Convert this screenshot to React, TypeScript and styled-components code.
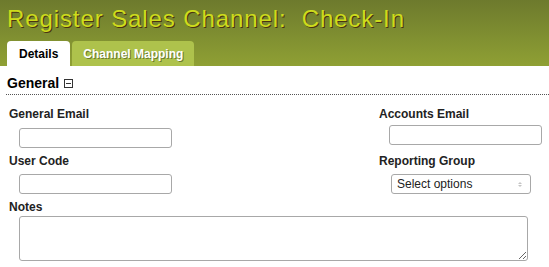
import styled, { createGlobalStyle } from "styled-components";

const GlobalStyle = createGlobalStyle`
  html, body {
    margin: 0;
    padding: 0;
    background: #ffffff;
    font-family: "Liberation Sans", Arial, sans-serif;
    overflow: hidden;
  }
`;

const Header = styled.div`
  height: 66px;
  background: linear-gradient(#6d7a2d, #8fa034);
  display: flex;
  flex-direction: column;
  justify-content: space-between;
`;

const Title = styled.h1`
  margin: 0;
  padding: 5px 0 0 7px;
  font-family: "Liberation Sans", Arial, sans-serif;
  font-size: 24px;
  font-weight: normal;
  letter-spacing: 0.9px;
  color: #cddc1c;
  text-shadow: 1px 1px 0 #4a3310;
  white-space: pre;
`;

const Tabs = styled.div`
  display: flex;
  gap: 2px;
  padding-left: 7px;
`;

const Tab = styled.div<{ $active?: boolean }>`
  height: 25px;
  padding: 0 ${(p) => (p.$active ? "12px" : "11px")};
  display: flex;
  align-items: center;
  border-radius: 4px 4px 0 0;
  font-size: 12px;
  font-weight: bold;
  background: ${(p) => (p.$active ? "#ffffff" : "#aec24c")};
  color: ${(p) => (p.$active ? "#000000" : "#ffffff")};
  text-shadow: ${(p) => (p.$active ? "none" : "1px 1px 0 #6b7a30")};
`;

const Section = styled.div`
  padding: 9px 0 0 6px;
`;

const SectionHead = styled.div`
  display: flex;
  align-items: center;
  gap: 5px;
  padding: 0 0 3px 1px;
  border-bottom: 1px dotted #555555;
  font-size: 14px;
  font-weight: bold;
  color: #000000;
`;

const Toggle = styled.span`
  width: 7px;
  height: 7px;
  border: 1px solid #333333;
  position: relative;
  margin-top: 1px;
  &::after {
    content: "";
    position: absolute;
    left: 1px;
    right: 1px;
    top: 3px;
    height: 1px;
    background: #333333;
  }
`;

const Grid = styled.div`
  display: grid;
  grid-template-columns: 370px 1fr;
  padding: 12px 0 0 3px;
  row-gap: 6px;
`;

const Field = styled.div<{ $span?: boolean }>`
  display: flex;
  flex-direction: column;
  grid-column: ${(p) => (p.$span ? "1 / span 2" : "auto")};
`;

const Label = styled.label<{ $gap?: number }>`
  font-size: 12px;
  font-weight: bold;
  color: #222222;
  margin-bottom: ${(p) => p.$gap ?? 6}px;
`;

const Input = styled.input<{ $w: number }>`
  box-sizing: border-box;
  width: ${(p) => p.$w}px;
  height: 20px;
  margin-left: 10px;
  border: 1px solid #a8a8a8;
  border-radius: 3px;
  background: #ffffff;
`;

const Select = styled.div`
  box-sizing: border-box;
  width: 140px;
  height: 20px;
  margin-left: 12px;
  border: 1px solid #a8a8a8;
  border-radius: 3px;
  display: flex;
  align-items: center;
  justify-content: space-between;
  padding: 0 8px 0 5px;
  font-size: 12px;
  color: #222222;
`;

const Arrows = styled.span`
  display: flex;
  flex-direction: column;
  gap: 1px;
  &::before,
  &::after {
    content: "";
    border-left: 2px solid transparent;
    border-right: 2px solid transparent;
  }
  &::before {
    border-bottom: 2px solid #c4c4c4;
  }
  &::after {
    border-top: 2px solid #c4c4c4;
  }
`;

const TextArea = styled.textarea`
  box-sizing: border-box;
  width: 509px;
  height: 45px;
  margin-left: 10px;
  border: 1px solid #a8a8a8;
  border-radius: 3px;
  resize: both;
`;

export default function App() {
  return (
    <>
      <GlobalStyle />
      <Header>
        <Title>Register Sales Channel:  Check-In</Title>
        <Tabs>
          <Tab $active>Details</Tab>
          <Tab>Channel Mapping</Tab>
        </Tabs>
      </Header>
      <Section>
        <SectionHead>
          General <Toggle />
        </SectionHead>
        <Grid>
          <Field>
            <Label $gap={7}>General Email</Label>
            <Input $w={153} />
          </Field>
          <Field>
            <Label $gap={4}>Accounts Email</Label>
            <Input $w={153} />
          </Field>
          <Field>
            <Label>User Code</Label>
            <Input $w={153} />
          </Field>
          <Field>
            <Label>Reporting Group</Label>
            <Select>
              Select options
              <Arrows />
            </Select>
          </Field>
          <Field $span>
            <Label $gap={2}>Notes</Label>
            <TextArea />
          </Field>
        </Grid>
      </Section>
    </>
  );
}
